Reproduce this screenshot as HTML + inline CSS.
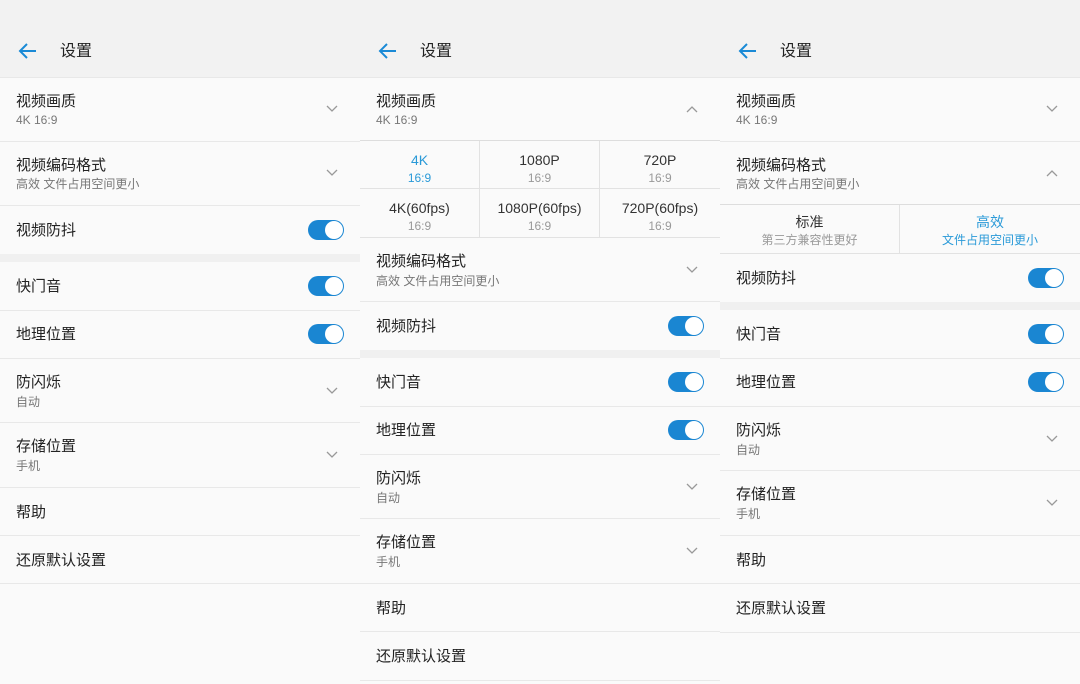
<!DOCTYPE html>
<html><head><meta charset="utf-8"><style>
*{margin:0;padding:0;box-sizing:border-box}
body{width:1080px;height:684px;overflow:hidden;background:#fafafa;font-family:"Liberation Sans","Noto Sans CJK SC",sans-serif;position:relative}
.p{position:absolute;top:0;width:360px;height:684px;background:#fafafa}
.h{position:absolute;left:0;top:0;width:360px;height:78px;background:#f2f2f2;border-bottom:1px solid #e8e8e8}
.h svg{position:absolute;left:18px;top:42px}
.h span{position:absolute;left:60px;top:42px;font-size:16px;color:#222;line-height:20px}
.r{position:absolute;left:0;width:360px;background:#fafafa;border-bottom:1px solid #e8e8e8}
.t{position:absolute;left:16px;font-size:15px;color:#222;line-height:18px;white-space:nowrap;margin-top:1px}
.s{position:absolute;left:16px;font-size:12px;color:#777;line-height:14px;white-space:nowrap;margin-top:1px}
.g{position:absolute;left:0;width:360px;height:8px;background:#f0f0f0}
.c{position:absolute;left:326px;width:12px;height:8px}
.tg{position:absolute;left:308px;width:36px;height:20px;border-radius:10px;background:#1a86d2}
.tg::after{content:"";position:absolute;right:1px;top:1px;width:18px;height:18px;border-radius:50%;background:#fff}
.cell{position:absolute;text-align:center;border-right:1px solid #e2e2e2;border-bottom:1px solid #e2e2e2;background:#fafafa}
.cell b{display:block;font-weight:normal;font-size:14px;color:#333;line-height:16px}
.cell i{display:block;font-style:normal;font-size:12px;color:#999;line-height:14px;margin-top:3px}
.bl b,.bl i{color:#2a9ad8}
</style></head><body>

<!-- Panel 1 -->
<div class="p" style="left:0">
<div class="h"><svg width="20" height="18" viewBox="0 0 20 18"><path d="M18 9H3M9 2L2 9l7 7" fill="none" stroke="#1a8ad6" stroke-width="2"/></svg><span>设置</span></div>
<div class="r" style="top:78px;height:64px"><div class="t" style="top:14px">视频画质</div><div class="s" style="top:34px">4K 16:9</div><svg class="c" style="top:27px" viewBox="0 0 12 8"><path d="M1 1l5 5 5-5" fill="none" stroke="#999" stroke-width="1.3"/></svg></div>
<div class="r" style="top:142px;height:64px"><div class="t" style="top:14px">视频编码格式</div><div class="s" style="top:34px">高效 文件占用空间更小</div><svg class="c" style="top:27px" viewBox="0 0 12 8"><path d="M1 1l5 5 5-5" fill="none" stroke="#999" stroke-width="1.3"/></svg></div>
<div class="r" style="top:206px;height:48px;border:0"><div class="t" style="top:15px">视频防抖</div><div class="tg" style="top:14px"></div></div>
<div class="g" style="top:254px"></div>
<div class="r" style="top:262px;height:49px"><div class="t" style="top:15px">快门音</div><div class="tg" style="top:14px"></div></div>
<div class="r" style="top:311px;height:48px"><div class="t" style="top:14px">地理位置</div><div class="tg" style="top:13px"></div></div>
<div class="r" style="top:359px;height:64px"><div class="t" style="top:14px">防闪烁</div><div class="s" style="top:35px">自动</div><svg class="c" style="top:28px" viewBox="0 0 12 8"><path d="M1 1l5 5 5-5" fill="none" stroke="#999" stroke-width="1.3"/></svg></div>
<div class="r" style="top:423px;height:65px"><div class="t" style="top:14px">存储位置</div><div class="s" style="top:35px">手机</div><svg class="c" style="top:28px" viewBox="0 0 12 8"><path d="M1 1l5 5 5-5" fill="none" stroke="#999" stroke-width="1.3"/></svg></div>
<div class="r" style="top:488px;height:48px"><div class="t" style="top:15px">帮助</div></div>
<div class="r" style="top:536px;height:48px"><div class="t" style="top:15px">还原默认设置</div></div>
</div>

<!-- Panel 2 -->
<div class="p" style="left:360px">
<div class="h"><svg width="20" height="18" viewBox="0 0 20 18"><path d="M18 9H3M9 2L2 9l7 7" fill="none" stroke="#1a8ad6" stroke-width="2"/></svg><span>设置</span></div>
<div class="r" style="top:78px;height:63px;border-color:#ddd"><div class="t" style="top:14px">视频画质</div><div class="s" style="top:34px">4K 16:9</div><svg class="c" style="top:27px" viewBox="0 0 12 8"><path d="M1 7l5-5 5 5" fill="none" stroke="#999" stroke-width="1.3"/></svg></div>
<div class="cell bl" style="left:0;top:141px;width:120px;height:48px;padding-top:11px"><b>4K</b><i>16:9</i></div>
<div class="cell" style="left:120px;top:141px;width:120px;height:48px;padding-top:11px"><b>1080P</b><i>16:9</i></div>
<div class="cell" style="left:240px;top:141px;width:120px;height:48px;padding-top:11px;border-right:0"><b>720P</b><i>16:9</i></div>
<div class="cell" style="left:0;top:189px;width:120px;height:49px;padding-top:11px"><b>4K(60fps)</b><i>16:9</i></div>
<div class="cell" style="left:120px;top:189px;width:120px;height:49px;padding-top:11px"><b>1080P(60fps)</b><i>16:9</i></div>
<div class="cell" style="left:240px;top:189px;width:120px;height:49px;padding-top:11px;border-right:0"><b>720P(60fps)</b><i>16:9</i></div>
<div class="r" style="top:238px;height:64px"><div class="t" style="top:14px">视频编码格式</div><div class="s" style="top:35px">高效 文件占用空间更小</div><svg class="c" style="top:28px" viewBox="0 0 12 8"><path d="M1 1l5 5 5-5" fill="none" stroke="#999" stroke-width="1.3"/></svg></div>
<div class="r" style="top:302px;height:48px;border:0"><div class="t" style="top:15px">视频防抖</div><div class="tg" style="top:14px"></div></div>
<div class="g" style="top:350px"></div>
<div class="r" style="top:358px;height:49px"><div class="t" style="top:15px">快门音</div><div class="tg" style="top:14px"></div></div>
<div class="r" style="top:407px;height:48px"><div class="t" style="top:14px">地理位置</div><div class="tg" style="top:13px"></div></div>
<div class="r" style="top:455px;height:64px"><div class="t" style="top:14px">防闪烁</div><div class="s" style="top:35px">自动</div><svg class="c" style="top:28px" viewBox="0 0 12 8"><path d="M1 1l5 5 5-5" fill="none" stroke="#999" stroke-width="1.3"/></svg></div>
<div class="r" style="top:519px;height:65px"><div class="t" style="top:14px">存储位置</div><div class="s" style="top:35px">手机</div><svg class="c" style="top:28px" viewBox="0 0 12 8"><path d="M1 1l5 5 5-5" fill="none" stroke="#999" stroke-width="1.3"/></svg></div>
<div class="r" style="top:584px;height:48px"><div class="t" style="top:15px">帮助</div></div>
<div class="r" style="top:632px;height:49px"><div class="t" style="top:15px">还原默认设置</div></div>
</div>

<!-- Panel 3 -->
<div class="p" style="left:720px">
<div class="h"><svg width="20" height="18" viewBox="0 0 20 18"><path d="M18 9H3M9 2L2 9l7 7" fill="none" stroke="#1a8ad6" stroke-width="2"/></svg><span>设置</span></div>
<div class="r" style="top:78px;height:64px"><div class="t" style="top:14px">视频画质</div><div class="s" style="top:34px">4K 16:9</div><svg class="c" style="top:27px" viewBox="0 0 12 8"><path d="M1 1l5 5 5-5" fill="none" stroke="#999" stroke-width="1.3"/></svg></div>
<div class="r" style="top:142px;height:63px;border-color:#ddd"><div class="t" style="top:14px">视频编码格式</div><div class="s" style="top:34px">高效 文件占用空间更小</div><svg class="c" style="top:27px" viewBox="0 0 12 8"><path d="M1 7l5-5 5 5" fill="none" stroke="#999" stroke-width="1.3"/></svg></div>
<div class="cell" style="left:0;top:205px;width:180px;height:49px;padding-top:9px"><b>标准</b><i>第三方兼容性更好</i></div>
<div class="cell bl" style="left:180px;top:205px;width:180px;height:49px;padding-top:9px;border-right:0"><b>高效</b><i>文件占用空间更小</i></div>
<div class="r" style="top:254px;height:48px;border:0"><div class="t" style="top:15px">视频防抖</div><div class="tg" style="top:14px"></div></div>
<div class="g" style="top:302px"></div>
<div class="r" style="top:310px;height:49px"><div class="t" style="top:15px">快门音</div><div class="tg" style="top:14px"></div></div>
<div class="r" style="top:359px;height:48px"><div class="t" style="top:14px">地理位置</div><div class="tg" style="top:13px"></div></div>
<div class="r" style="top:407px;height:64px"><div class="t" style="top:14px">防闪烁</div><div class="s" style="top:35px">自动</div><svg class="c" style="top:28px" viewBox="0 0 12 8"><path d="M1 1l5 5 5-5" fill="none" stroke="#999" stroke-width="1.3"/></svg></div>
<div class="r" style="top:471px;height:65px"><div class="t" style="top:14px">存储位置</div><div class="s" style="top:35px">手机</div><svg class="c" style="top:28px" viewBox="0 0 12 8"><path d="M1 1l5 5 5-5" fill="none" stroke="#999" stroke-width="1.3"/></svg></div>
<div class="r" style="top:536px;height:48px"><div class="t" style="top:15px">帮助</div></div>
<div class="r" style="top:584px;height:49px"><div class="t" style="top:15px">还原默认设置</div></div>
</div>
</body></html>
